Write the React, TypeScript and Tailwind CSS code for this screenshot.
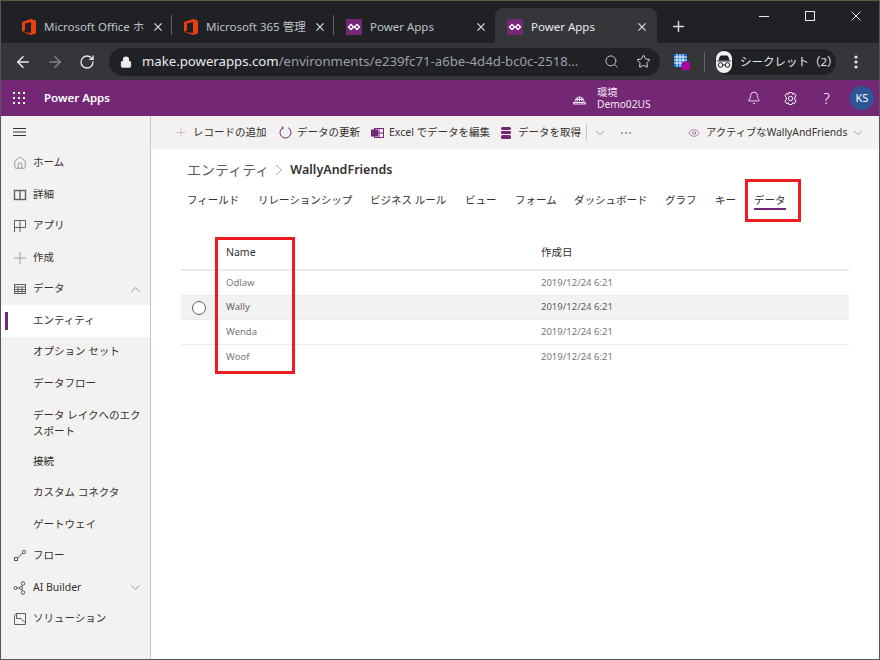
import React from "react";
import { ArrowLeft, ArrowRight, RotateCw, Lock, Search, Star, Plus, Bell, ChevronDown, ChevronUp, Home, Eye, MoreHorizontal } from "lucide-react";

const ui = { fontFamily: '"Noto Sans","Noto Sans CJK JP",sans-serif' };

function CloseX({ size = 10, color = "#dadce0", w = 1.5 }: { size?: number; color?: string; w?: number }) {
  return (
    <svg width={size} height={size} viewBox="0 0 10 10" fill="none" stroke={color} strokeWidth={w} className="shrink-0">
      <path d="M.5 .5L9.5 9.5M9.5 .5L.5 9.5" />
    </svg>
  );
}
function OfficeIcon() {
  return (
    <svg width="14" height="16" viewBox="0 0 14 16" className="shrink-0">
      <path d="M0 3 L9 0 L14 1.5 V14.5 L9 16 L0 13 L9 14 V3 L3 4.5 V11.5 L0 13Z" fill="#e8400c" />
    </svg>
  );
}
function PaIcon() {
  return (
    <svg width="16" height="16" viewBox="0 0 16 16" className="shrink-0">
      <rect width="16" height="16" fill="#742774" />
      <path d="M5 5.5 L7.5 8 L5 10.5 L2.5 8Z M11 5.5 L13.5 8 L11 10.5 L8.5 8Z" fill="none" stroke="#fff" strokeWidth="1.4" />
    </svg>
  );
}
function Tab({ icon, title, active, w, sep }: { icon: React.ReactNode; title: string; active?: boolean; w: string; sep?: boolean }) {
  return (
    <div className={`relative flex h-[35px] shrink-0 items-center pt-[2px] ${w} ${active ? "rounded-t-lg bg-[#35363a] pl-3 pr-[11px]" : "pl-3 pr-[10px]"}`}>
      {icon}
      <span className={`ml-2 flex-1 whitespace-nowrap text-[11.5px] ${active ? "text-[#e8eaed]" : "text-[#bdc1c6]"}`}>{title}</span>
      <CloseX size={8} />
      {sep && <span className="absolute right-0 top-[7px] h-[20px] w-px bg-[#5f6368]" />}
    </div>
  );
}

function NavIcon({ kind }: { kind: string }) {
  const c = "#605e5c";
  const p = { width: 14, height: 14, fill: "none", stroke: c, strokeWidth: 1 } as const;
  if (kind === "home") return <Home size={14} strokeWidth={1} color={c} />;
  if (kind === "book") return <svg {...p} viewBox="0 0 14 14"><rect x="1.5" y="2.5" width="11" height="9" strokeWidth="1.4" /><path d="M7 2.5V11.5" strokeWidth="1.4" /></svg>;
  if (kind === "app") return <svg {...p} viewBox="0 0 14 14"><path d="M1.5 13V1.5H12.5V8.5H1.5M7 1.5V13" /></svg>;
  if (kind === "plus") return <svg width="14" height="14" viewBox="0 0 14 14" fill="none" stroke="#a19f9d"><path d="M7 1V13M1 7H13" /></svg>;
  if (kind === "table") return <svg {...p} viewBox="0 0 14 14"><rect x="1.5" y="2.5" width="11" height="9" /><path d="M1.5 5H12.5M1.5 7.5H12.5M1.5 9.5H12.5M5 5V11.5M9 5V11.5" /></svg>;
  if (kind === "flow") return <svg {...p} viewBox="0 0 14 14"><rect x="1.5" y="8.5" width="3" height="3" /><circle cx="11" cy="3" r="1.7" /><path d="M4.5 9L9.5 4" /></svg>;
  if (kind === "ai") return <svg {...p} viewBox="0 0 14 14"><circle cx="2.5" cy="7" r="1.5" /><circle cx="10" cy="2.5" r="1.8" /><circle cx="10" cy="11.5" r="1.8" /><circle cx="8" cy="7" r="1.5" /><path d="M4 7H6.5M8.8 5.7L9.5 4.2M8.8 8.3L9.5 9.8" /></svg>;
  if (kind === "sol") return <svg {...p} viewBox="0 0 14 14"><path d="M1.5 3.5L3.5 1.5H12.5V12.5H1.5ZM3.5 1.5V6.5H8L12.5 11" /></svg>;
  return null;
}

function NavRow({ label, icon, active, chevron }: { label: string; icon?: string; active?: boolean; chevron?: "up" | "down" }) {
  return (
    <div className={`relative flex h-[31.5px] shrink-0 items-center pl-[12px] pr-[7px] text-[#323130] ${active ? "bg-white" : ""}`}>
      {active && <span className="absolute left-[4px] top-[7px] h-[18px] w-[3px] bg-[#742774]" />}
      <span className="flex w-[20px] shrink-0 items-center">{icon && <NavIcon kind={icon} />}</span>
      <span className="flex-1 whitespace-nowrap">{label}</span>
      {chevron === "up" && <ChevronUp size={15} strokeWidth={1} color="#605e5c" />}
      {chevron === "down" && <ChevronDown size={15} strokeWidth={1} color="#605e5c" />}
    </div>
  );
}

function Cmd({ icon, label, cls }: { icon: React.ReactNode; label: string; cls: string }) {
  return (
    <div className={`flex items-center ${cls}`}>
      <span className="flex w-[14px] shrink-0 items-center justify-center">{icon}</span>
      <span className="ml-[5px] whitespace-nowrap">{label}</span>
    </div>
  );
}

const rows = ["Odlaw", "Wally", "Wenda", "Woof"];
const tabs: [string, string][] = [
  ["フィールド", "w-[71px]"], ["リレーションシップ", "w-[112px]"], ["ビジネス ルール", "w-[95px]"], ["ビュー", "w-[50px]"],
  ["フォーム", "w-[59px]"], ["ダッシュボード", "w-[91px]"], ["グラフ", "w-[50px]"], ["キー", "w-[39px]"],
];

export default function App() {
  return (
    <div style={ui} className="relative flex h-[660px] w-[880px] flex-col overflow-hidden border border-[#55565a] border-t-[#5a5c3a] bg-white">
      {/* tab strip */}
      <div className="relative flex h-[42px] shrink-0 items-end bg-[#202124] pl-[9px]">
        <Tab icon={<OfficeIcon />} title="Microsoft Office ホ" w="w-[162px]" sep />
        <Tab icon={<OfficeIcon />} title="Microsoft 365 管理" w="w-[162px]" sep />
        <Tab icon={<PaIcon />} title="Power Apps" w="w-[161px]" />
        <Tab icon={<PaIcon />} title="Power Apps" w="w-[162px]" active />
        <Plus size={17} strokeWidth={2} className="mb-[8px] ml-[13px] text-[#dadce0]" />
        <div className="mb-[22px] ml-auto flex items-center gap-[36px] pr-[18px]">
          <span className="block h-px w-[10px] bg-[#e8eaed]" />
          <span className="block h-[10px] w-[10px] border border-[#e8eaed]" />
          <CloseX size={10} color="#e8eaed" w={1} />
        </div>
      </div>
      {/* toolbar */}
      <div className="flex h-[37px] shrink-0 items-center bg-[#35363a] pl-[13px] text-[#e8eaed]">
        <ArrowLeft size={18} strokeWidth={2} />
        <ArrowRight size={18} strokeWidth={2} className="ml-[14px] text-[#7f8286]" />
        <RotateCw size={16} strokeWidth={2} className="ml-[15px]" />
        <div className="ml-[14px] flex h-[28px] w-[551px] items-center rounded-full bg-[#202124] pl-[11px] pr-[9px]">
          <Lock size={12} strokeWidth={2.5} fill="#e8eaed" />
          <span className="ml-[10px] flex-1 whitespace-nowrap text-[13.2px]">
            make.powerapps.com<span className="text-[#9aa0a6]">/environments/e239fc71-a6be-4d4d-bc0c-2518...</span>
          </span>
          <Search size={15} strokeWidth={1.6} className="text-[#bdc1c6]" />
          <Star size={15} strokeWidth={1.6} className="ml-[17px] text-[#dadce0]" />
        </div>
        <svg width="16" height="16" viewBox="0 0 16 16" className="ml-[14px]">
          <rect width="13" height="13" fill="#0f6cd6" />
          <path d="M3 0V13M6 0V13M9 0V13M0 3H13M0 6H13M0 9H13" stroke="#fff" strokeWidth="1" />
          <rect x="8" y="8" width="8" height="8" fill="#b4009e" />
        </svg>
        <span className="ml-[14px] h-[20px] w-px bg-[#5f6368]" />
        <div className="ml-[10px] flex h-[26px] w-[121px] items-center rounded-full bg-[#202124] pl-px">
          <span className="flex h-[22px] w-[22px] items-center justify-center rounded-full bg-[#f1f3f4]">
            <svg width="16" height="14" viewBox="0 0 16 14" fill="none" stroke="#202124"><path d="M3 5L4.5 1H11.5L13 5Z" fill="#202124" /><path d="M1 6H15" /><circle cx="4.5" cy="10" r="2.3" /><circle cx="11.5" cy="10" r="2.3" /><path d="M7 10H9" /></svg>
          </span>
          <span className="ml-2 whitespace-nowrap text-[11.5px]">シークレット（2）</span>
        </div>
        <svg width="4" height="14" viewBox="0 0 4 14" className="ml-[18px]" fill="#e8eaed"><circle cx="2" cy="2" r="1.6" /><circle cx="2" cy="7" r="1.6" /><circle cx="2" cy="12" r="1.6" /></svg>
      </div>
      {/* app header */}
      <div className="flex h-[36px] shrink-0 items-center bg-[#742774] pl-[12px] text-white">
        <svg width="12" height="12" viewBox="0 0 12 12" fill="#fff">
          {[0, 5, 10].flatMap((y) => [0, 5, 10].map((x) => <rect key={`${x}-${y}`} x={x} y={y} width="2" height="2" />))}
        </svg>
        <span className="ml-[19px] whitespace-nowrap text-[11.5px] font-semibold">Power Apps</span>
        <svg width="13" height="13" viewBox="0 0 13 13" fill="none" stroke="#f3e9f3" strokeWidth="1" className="ml-[463px] shrink-0">
          <path d="M2 9.5A4.5 4.5 0 0 1 11 9.5M.5 10.5H12.5V12H.5ZM6.5 5V9.5M4.3 6L4 9.5M8.7 6L9 9.5M2.5 7.5H10.5" />
        </svg>
        <div className="ml-[11px] flex flex-col whitespace-nowrap text-[10.2px] leading-[12.5px] text-[#f3e9f3]">
          <span>環境</span>
          <span>Demo02US</span>
        </div>
        <Bell size={14} strokeWidth={1.4} className="ml-[96px] shrink-0" />
        <svg width="15" height="15" viewBox="0 0 15 15" fill="none" stroke="#fff" className="ml-[22px] shrink-0">
          <circle cx="7.5" cy="7.5" r="2.2" />
          <path d="M6 1.5H9L9.6 3.2L11.4 2.5L13 4.9L11.8 6.3V8.7L13 10.1L11.4 12.5L9.6 11.8L9 13.5H6L5.4 11.8L3.6 12.5L2 10.1L3.2 8.7V6.3L2 4.9L3.6 2.5L5.4 3.2Z" />
        </svg>
        <span className="ml-[26px] text-[15px] font-light">?</span>
        <span className="ml-[20px] flex h-[24px] w-[24px] shrink-0 items-center justify-center rounded-full bg-[#2b5797] text-[11px]">KS</span>
      </div>
      {/* body */}
      <div className="flex min-h-0 flex-1">
        <div className="flex w-[150px] shrink-0 flex-col border-r border-[#c8c6c4] bg-[#f3f2f1] text-[10.5px]">
          <div className="flex h-[31.5px] shrink-0 items-center pl-[12px]">
            <svg width="13" height="8" viewBox="0 0 13 8" fill="none" stroke="#323130"><path d="M0 .5H13M0 4H13M0 7.5H13" /></svg>
          </div>
          <NavRow label="ホーム" icon="home" />
          <NavRow label="詳細" icon="book" />
          <NavRow label="アプリ" icon="app" />
          <NavRow label="作成" icon="plus" />
          <NavRow label="データ" icon="table" chevron="up" />
          <NavRow label="エンティティ" active />
          <NavRow label="オプション セット" />
          <NavRow label="データフロー" />
          <div className="flex h-[46.5px] shrink-0 items-center pl-[32px] pr-[4px] leading-[16px] text-[#323130]">
            <span>データ レイクへのエク<br />スポート</span>
          </div>
          <NavRow label="接続" />
          <NavRow label="カスタム コネクタ" />
          <NavRow label="ゲートウェイ" />
          <NavRow label="フロー" icon="flow" />
          <NavRow label="AI Builder" icon="ai" chevron="down" />
          <NavRow label="ソリューション" icon="sol" />
        </div>
        <div className="relative flex min-w-0 flex-1 flex-col">
          {/* command bar */}
          <div className="flex h-[33px] shrink-0 items-center bg-[#f3f2f1] pl-[23px] text-[10.5px] text-[#323130]">
            <Cmd icon={<Plus size={15} strokeWidth={1} color="#b5a0a5" />} label="レコードの追加" cls="w-[104px]" />
            <Cmd icon={<svg width="13" height="13" viewBox="0 0 13 13" fill="none" stroke="#742774"><path d="M4 1.6A5.5 5.5 0 1 0 9 1.6M2.5 .8L4.2 1.5L3.6 3.3" /></svg>} label="データの更新" cls="w-[92px]" />
            <Cmd icon={<svg width="13" height="12" viewBox="0 0 13 12" fill="none" stroke="#742774"><rect x="3.5" y="1.5" width="9" height="9" /><path d="M3.5 6H12.5M8 1.5V10.5" /><rect x=".5" y="3" width="6" height="6" fill="#742774" /></svg>} label="Excel でデータを編集" cls="w-[129px]" />
            <Cmd icon={<svg width="10" height="12" viewBox="0 0 10 12" fill="#742774"><rect x="0" y="0" width="10" height="3" rx="1.5" /><rect x="0" y="4" width="10" height="3" rx="1" /><rect x="0" y="8" width="10" height="4" rx="1.5" /></svg>} label="データを取得" cls="w-[87px]" />
            <span className="h-[17px] w-px bg-[#c8c6c4]" />
            <ChevronDown size={14} strokeWidth={1} color="#605e5c" className="ml-[6px]" />
            <MoreHorizontal size={14} strokeWidth={1} color="#605e5c" className="ml-[12px]" />
            <Eye size={12} strokeWidth={1} color="#742774" className="ml-[55px]" />
            <span className="ml-[6px] whitespace-nowrap text-[10.3px]">アクティブなWallyAndFriends</span>
            <ChevronDown size={14} strokeWidth={1} color="#605e5c" className="ml-[4px]" />
          </div>
          {/* breadcrumb */}
          <div className="flex items-center pl-[36px] pt-[11px] text-[#323130]">
            <span className="text-[14px] leading-[20px] text-[#605e5c]">エンティティ</span>
            <svg width="8" height="12" viewBox="0 0 8 12" fill="none" stroke="#a19f9d" className="ml-[6px]"><path d="M1 1L6.5 6L1 11" /></svg>
            <span className="ml-[7px] text-[12.5px] font-semibold leading-[20px]">WallyAndFriends</span>
          </div>
          {/* tabs */}
          <div className="mt-[11px] flex h-[20px] items-center pl-[36px] text-[10.5px] text-[#323130]">
            {tabs.map(([t, w]) => (
              <span key={t} className={`${w} shrink-0 whitespace-nowrap`}>{t}</span>
            ))}
            <span className="relative whitespace-nowrap">
              データ
              <span className="absolute -bottom-[1px] left-0 right-0 h-[2px] bg-[#742774]" />
            </span>
          </div>
          {/* table */}
          <div className="ml-[30px] mt-[19px] w-[668px] text-[9.5px] text-[#797775]">
            <div className="flex h-[41px] items-center border-b-2 border-[#edebe9] pt-[6px] text-[10.5px] text-[#323130]">
              <span className="ml-[45px] w-[315px]">Name</span>
              <span>作成日</span>
            </div>
            {rows.map((r, i) => (
              <div key={r} className={`flex h-[24.7px] items-center border-b ${i === 3 ? "border-transparent" : "border-[#edebe9]"} ${i === 1 ? "bg-[#f3f2f1] text-[#605e5c]" : ""}`}>
                <span className="flex w-[45px] justify-center pr-[9px]">
                  {i === 1 && <span className="h-[14px] w-[14px] rounded-full border border-[#605e5c] bg-white" />}
                </span>
                <span className="w-[315px]">{r}</span>
                <span>2019/12/24 6:21</span>
              </div>
            ))}
          </div>
          {/* annotation boxes */}
          <div className="absolute left-[594px] top-[63px] h-[43px] w-[56px] border-[3px] border-[#ed1c24]" />
          <div className="absolute left-[64px] top-[121px] h-[137px] w-[80px] border-[3px] border-[#ed1c24]" />
        </div>
      </div>
    </div>
  );
}
